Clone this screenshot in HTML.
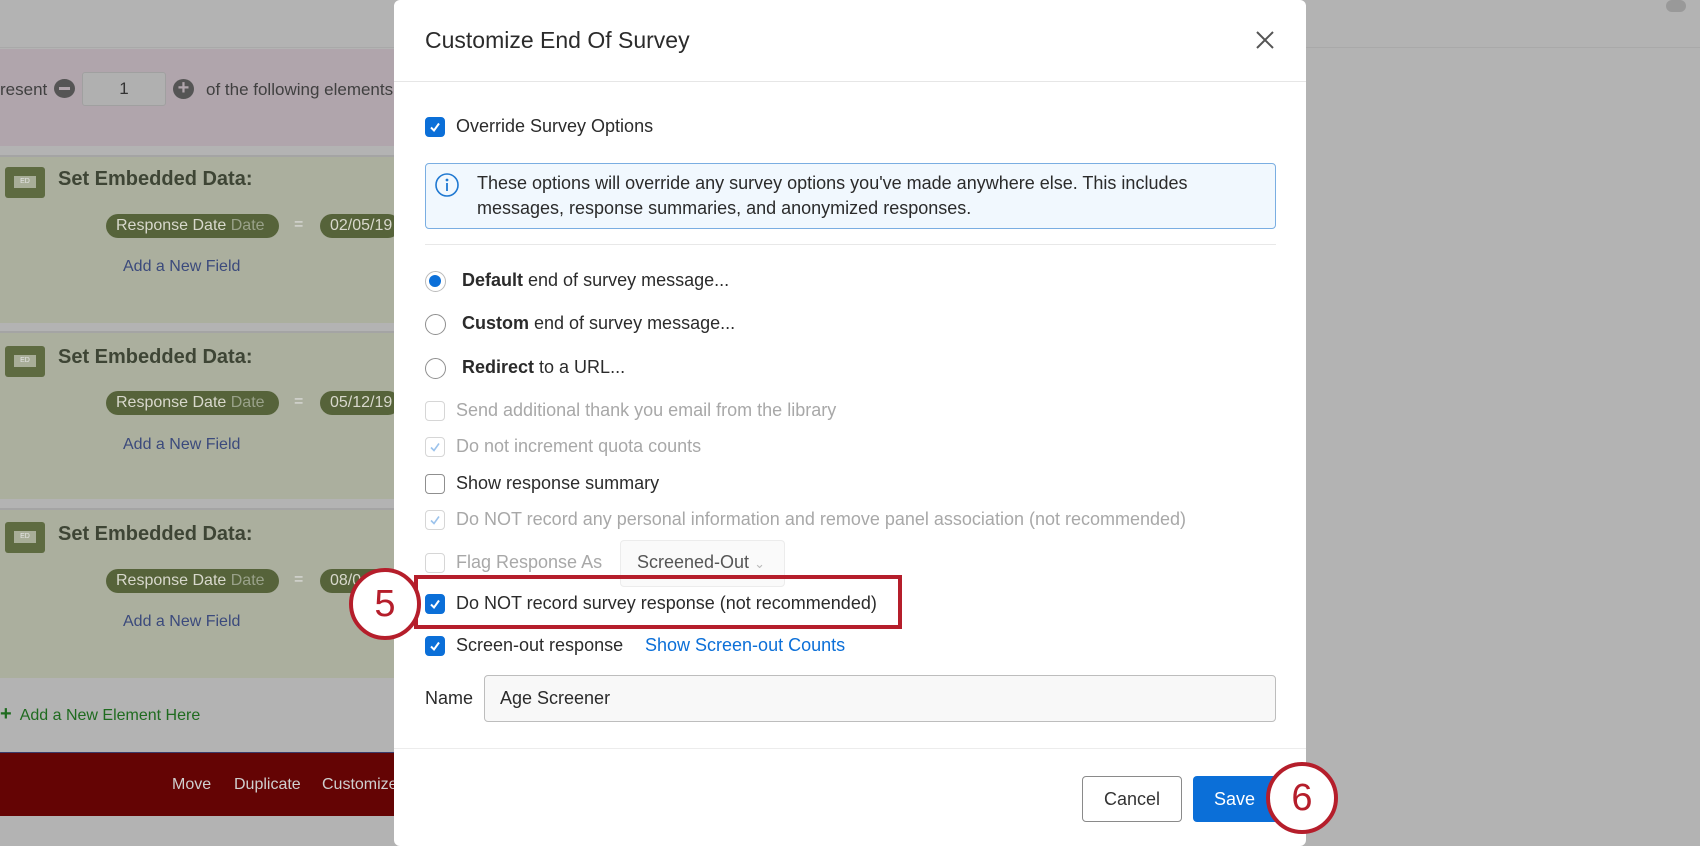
<!DOCTYPE html>
<html><head><meta charset="utf-8"><style>
*{box-sizing:border-box;margin:0;padding:0}
body{width:1700px;height:846px;overflow:hidden;background:#b3b3b3;font-family:"Liberation Sans",sans-serif;position:relative}
.a{position:absolute}
.pink{left:0;top:49px;width:394px;height:97px;background:#b0a5ac}
.grn{left:0;width:394px;background:#abaf9e;border-top:2px solid #a4a4a4}
.ed{left:5px;width:40px;height:31px;background:#5e6b41;border-radius:3px}
.ed:after{content:"ED";position:absolute;left:9px;top:9px;width:22px;height:12px;background:#a8ae98;color:#e6e6e6;font-size:7px;text-align:center;line-height:12px}
.sed{left:58px;font-weight:bold;font-size:20px;color:#3e4535}
.pill{left:106px;width:173px;height:24px;border-radius:12px;background:#56633a;color:#d8d8cc;font-size:16px;line-height:24px;padding-left:10px;white-space:nowrap}
.pill span{color:#9aa28a}
.eq{left:294px;color:#e0e0e0;font-size:16px}
.val{left:320px;width:80px;height:24px;border-radius:12px;background:#56633a;color:#d8d8cc;font-size:16px;line-height:24px;padding-left:10px}
.anf{left:123px;color:#3b4a7c;font-size:16px}
.modal{left:394px;top:0;width:912px;height:846px;background:#fff;border-radius:6px}
.t{font-size:18px;color:#2b2b2b;left:456px}
.g{color:#a8a8a8}
.cb{left:425px;width:20px;height:20px;border-radius:4px;border:1.5px solid #8f8f8f;background:#fff}
.cb.on{background:#0b6fd8;border-color:#0b6fd8}
.cb.dis{border-color:#d6d6d6}
.cb svg{position:absolute;left:2px;top:2px}
.rd{left:425px;width:21px;height:21px;border-radius:50%;border:1.5px solid #8f8f8f}
.num{width:72px;height:72px;border-radius:50%;border:4px solid #b51e2b;background:#fff;color:#b51e2b;font-size:38px;text-align:center;line-height:64px}
</style></head><body>
<div class="a" style="left:0;top:47px;width:1700px;height:1px;background:#a9a9a9"></div>
<div class="a" style="left:1666px;top:0;width:20px;height:12px;border-radius:6px;background:#999"></div>
<div class="a pink"></div>
<div class="a" style="left:0;top:80px;font-size:17px;color:#404040">resent</div>
<div class="a" style="left:54px;top:79px;width:21px;height:19px;border-radius:50%;background:#555"><div class="a" style="left:5px;top:8px;width:11px;height:3px;background:#b0a5ac"></div></div>
<div class="a" style="left:82px;top:72px;width:84px;height:34px;background:#b0b0b0;border:1px solid #a0a0a0;border-radius:3px;text-align:center;line-height:32px;font-size:17px;color:#333">1</div>
<div class="a" style="left:173px;top:79px;width:21px;height:20px;border-radius:50%;background:#555;color:#b0a5ac;font-weight:bold;font-size:20px;line-height:19px;text-align:center">+</div>
<div class="a" style="left:206px;top:80px;font-size:17px;color:#404040;white-space:nowrap">of the following elements</div>

<div class="a grn" style="top:155px;height:168px"></div>
<div class="a ed" style="top:167px"></div><div class="a sed" style="top:168px">Set Embedded Data:</div>
<div class="a pill" style="top:214px">Response Date <span>Date</span></div><div class="a eq" style="top:216px">=</div><div class="a val" style="top:214px">02/05/19</div>
<div class="a anf" style="top:258px">Add a New Field</div>

<div class="a grn" style="top:331px;height:168px"></div>
<div class="a ed" style="top:346px"></div><div class="a sed" style="top:346px">Set Embedded Data:</div>
<div class="a pill" style="top:391px">Response Date <span>Date</span></div><div class="a eq" style="top:393px">=</div><div class="a val" style="top:391px">05/12/19</div>
<div class="a anf" style="top:436px">Add a New Field</div>

<div class="a grn" style="top:508px;height:170px"></div>
<div class="a ed" style="top:522px"></div><div class="a sed" style="top:523px">Set Embedded Data:</div>
<div class="a pill" style="top:569px">Response Date <span>Date</span></div><div class="a eq" style="top:571px">=</div><div class="a val" style="top:569px">08/0</div>
<div class="a anf" style="top:613px">Add a New Field</div>

<div class="a" style="left:0;top:703px;font-size:16px;color:#1f6b1f"><b style="font-size:20px">+</b>&nbsp; Add a New Element Here</div>
<div class="a" style="left:0;top:752px;width:394px;height:64px;background:#640404;border-top:1px solid #3b3b6b"></div>
<div class="a" style="left:172px;top:776px;color:#cfcfcf;font-size:16px">Move</div>
<div class="a" style="left:234px;top:776px;color:#cfcfcf;font-size:16px">Duplicate</div>
<div class="a" style="left:322px;top:776px;color:#cfcfcf;font-size:16px">Customize</div>

<div class="a modal"></div>
<div class="a" style="left:425px;top:27px;font-size:23px;color:#2b2b2b">Customize End Of Survey</div>
<div class="a" style="left:1254px;top:29px;width:22px;height:22px"><svg width="22" height="22"><path d="M3 3L19 19M19 3L3 19" stroke="#555" stroke-width="2"/></svg></div>
<div class="a" style="left:394px;top:81px;width:912px;height:1px;background:#e6e6e6"></div>

<div class="a cb on" style="top:117px"><svg width="14" height="14"><path d="M3 7.5l3 3 5-7" stroke="#fff" stroke-width="2" fill="none"/></svg></div>
<div class="a t" style="top:116px">Override Survey Options</div>
<div class="a" style="left:425px;top:163px;width:851px;height:66px;border:1.5px solid #7aaee2;border-radius:4px;background:#f1f8fe"></div>
<div class="a" style="left:434px;top:172px"><svg width="26" height="26"><circle cx="13" cy="13" r="11" stroke="#1f78d1" stroke-width="1.6" fill="none"/><circle cx="13" cy="8" r="1.4" fill="#1f78d1"/><path d="M13 11v8" stroke="#1f78d1" stroke-width="1.8"/></svg></div>
<div class="a" style="left:477px;top:171px;font-size:18px;color:#2b2b2b;line-height:25px">These options will override any survey options you've made anywhere else. This includes<br>messages, response summaries, and anonymized responses.</div>
<div class="a" style="left:425px;top:244px;width:851px;height:1px;background:#e8e8e8"></div>

<div class="a rd" style="top:271px;border-color:#bbb"><div class="a" style="left:3px;top:3px;width:12px;height:12px;border-radius:50%;background:#0b6fd8"></div></div>
<div class="a t" style="top:270px;left:462px"><b>Default</b> end of survey message...</div>
<div class="a rd" style="top:314px"></div>
<div class="a t" style="top:313px;left:462px"><b>Custom</b> end of survey message...</div>
<div class="a rd" style="top:358px"></div>
<div class="a t" style="top:357px;left:462px"><b>Redirect</b> to a URL...</div>

<div class="a cb dis" style="top:401px"></div><div class="a t g" style="top:400px">Send additional thank you email from the library</div>
<div class="a cb dis" style="top:437px"><svg width="14" height="14"><path d="M3 7.5l3 3 5-7" stroke="#9cc3ec" stroke-width="1.6" fill="none"/></svg></div><div class="a t g" style="top:436px">Do not increment quota counts</div>
<div class="a cb" style="top:474px"></div><div class="a t" style="top:473px">Show response summary</div>
<div class="a cb dis" style="top:510px"><svg width="14" height="14"><path d="M3 7.5l3 3 5-7" stroke="#9cc3ec" stroke-width="1.6" fill="none"/></svg></div><div class="a t g" style="top:509px">Do NOT record any personal information and remove panel association (not recommended)</div>
<div class="a cb dis" style="top:553px"></div><div class="a t g" style="top:552px">Flag Response As</div>
<div class="a" style="left:620px;top:540px;width:165px;height:47px;border:1px solid #ececec;border-radius:4px;background:#fafafa"></div>
<div class="a" style="left:637px;top:552px;font-size:18px;color:#555">Screened-Out <span style="color:#bbb;font-size:13px">&#8964;</span></div>

<div class="a cb on" style="top:594px"><svg width="14" height="14"><path d="M3 7.5l3 3 5-7" stroke="#fff" stroke-width="2" fill="none"/></svg></div>
<div class="a t" style="top:593px">Do NOT record survey response (not recommended)</div>
<div class="a" style="left:414px;top:575px;width:488px;height:54px;border:4px solid #b51e2b"></div>
<div class="a num" style="left:349px;top:568px">5</div>

<div class="a cb on" style="top:636px"><svg width="14" height="14"><path d="M3 7.5l3 3 5-7" stroke="#fff" stroke-width="2" fill="none"/></svg></div>
<div class="a t" style="top:635px">Screen-out response</div>
<div class="a t" style="top:635px;left:645px;color:#0b6fd8">Show Screen-out Counts</div>

<div class="a t" style="top:688px;left:425px">Name</div>
<div class="a" style="left:484px;top:675px;width:792px;height:47px;border:1px solid #bdbdbd;border-radius:4px;background:#f8f8f8"></div>
<div class="a t" style="top:688px;left:500px">Age Screener</div>

<div class="a" style="left:394px;top:748px;width:912px;height:1px;background:#ececec"></div>
<div class="a" style="left:1082px;top:776px;width:100px;height:46px;border:1px solid #8a8a8a;border-radius:4px;text-align:center;line-height:44px;font-size:18px;color:#333">Cancel</div>
<div class="a" style="left:1193px;top:776px;width:90px;height:46px;background:#0b6fd8;border-radius:4px;line-height:46px;padding-left:21px;font-size:18px;color:#fff">Save</div>
<div class="a num" style="left:1266px;top:762px">6</div>
</body></html>
